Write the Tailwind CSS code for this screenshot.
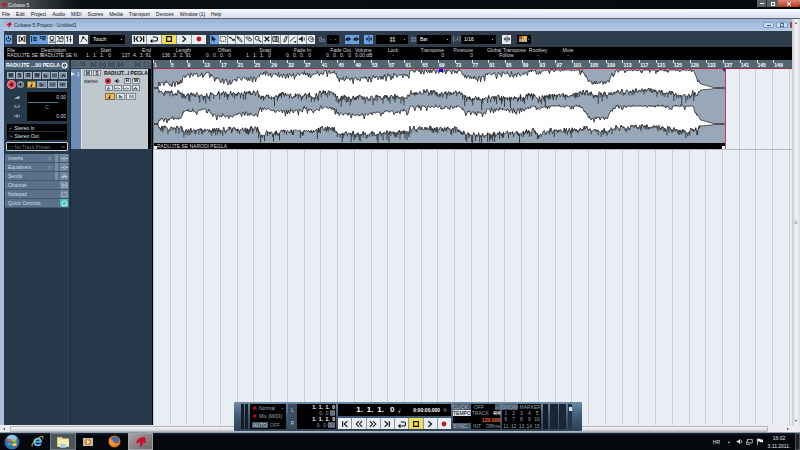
<!DOCTYPE html>
<html lang="en">
<head>
    <meta charset="UTF-8">
    <meta name="viewport" content="width=device-width, initial-scale=1.0">
    <title>Cubase 5</title>
    <script src="https://cdn.jsdelivr.net/npm/@tailwindcss/browser@4"></script>
</head>
<body class="h-screen flex flex-col overflow-hidden bg-[#05080c] font-['Liberation_Sans',sans-serif] text-[5px] leading-[6px] text-white">

    <!-- icons -->
    <svg class="hidden" fill="none">
        <symbol id="logo" viewBox="0 0 10 10"><path d="M8.5 1.5C5 1 2 3 1.500 5.500L4.500 4.500 5 9 6.500 5 9 5.500" fill="#c8102e" stroke="#c8102e"/></symbol>
        <symbol id="power" viewBox="0 0 10 10"><path d="M5 1v4M3 3a3 3 0 1 0 4 0" fill="none" stroke="currentColor" stroke-width="1.3"/></symbol>
        <symbol id="delay" viewBox="0 0 10 10"><path d="M1.500 1v8M8.500 1v8M3 2l4 6M7 2L3 8" fill="none" stroke="currentColor" stroke-width="1.2"/><circle cx="5" cy="5" r="1.500" fill="currentColor"/></symbol>
        <symbol id="inspector" viewBox="0 0 10 10"><path d="M2 1v8M5 2v6M5 3h4M5 5h4M5 7h4" fill="none" stroke="currentColor"/></symbol>
        <symbol id="infoline" viewBox="0 0 10 10"><path d="M1 2h8M1 4h8M4 6h4" fill="none" stroke="currentColor" stroke-width="1.200"/></symbol>
        <symbol id="overview" viewBox="0 0 10 10"><circle cx="5" cy="4" r="2.500" fill="none" stroke="currentColor"/><path d="M1 9h8M3 7h4" stroke="currentColor"/></symbol>
        <symbol id="pool" viewBox="0 0 10 10"><path d="M1 2h3v2h5M4 4v4h5M1 8h2M6 2h3v5" fill="none" stroke="currentColor"/></symbol>
        <symbol id="mixer" viewBox="0 0 10 10"><path d="M3 1v8M7 1v8M1.500 3h3M5.500 6h3" stroke="currentColor"/></symbol>
        <symbol id="automation" viewBox="0 0 10 10"><path d="M1 9l3-6 2 1 3 4" fill="none" stroke="currentColor"/><circle cx="4" cy="3" r="1.300" fill="currentColor"/></symbol>
        <symbol id="prev" viewBox="0 0 10 10"><path d="M2 1.500v7M8 1.500L4 5l4 3.500" fill="none" stroke="currentColor" stroke-width="1.400"/></symbol>
        <symbol id="next" viewBox="0 0 10 10"><path d="M8 1.500v7M2 1.500L6 5 2 8.500" fill="none" stroke="currentColor" stroke-width="1.400"/></symbol>
        <symbol id="prevnext" viewBox="0 0 18 10"><path d="M3 1v8M8 1.500L5 5l3 3.500M15 1v8M10 1.500L13 5l-3 3.500" fill="none" stroke="currentColor" stroke-width="1.500"/></symbol>
        <symbol id="rewind" viewBox="0 0 10 10"><path d="M5 1.500L1.500 5 5 8.500M9 1.500L5.500 5 9 8.500" fill="none" stroke="currentColor" stroke-width="1.300"/></symbol>
        <symbol id="forward" viewBox="0 0 10 10"><path d="M1 1.500L4.500 5 1 8.500M5 1.500L8.500 5 5 8.500" fill="none" stroke="currentColor" stroke-width="1.300"/></symbol>
        <symbol id="loop" viewBox="0 0 10 10"><path d="M3.500 2.500H7a2 2 0 0 1 0 5H1M3 5.500l-2 2 2 2" fill="none" stroke="currentColor" stroke-width="1.300"/></symbol>
        <symbol id="stop" viewBox="0 0 10 10"><path d="M2 2h6v6H2z" fill="none" stroke="currentColor" stroke-width="1.400"/></symbol>
        <symbol id="play" viewBox="0 0 10 10"><path d="M3 1.500L7 5 3 8.500" fill="none" stroke="currentColor" stroke-width="1.500"/></symbol>
        <symbol id="record" viewBox="0 0 10 10"><circle cx="5" cy="5" r="3" fill="#c01828"/></symbol>
        <symbol id="arrow" viewBox="0 0 10 10"><path d="M2 1v7l2-2 1 3 1-1-1-2h3z" fill="currentColor"/></symbol>
        <symbol id="range" viewBox="0 0 10 10"><path d="M1.500 2h7v6h-7z" fill="none" stroke="currentColor" stroke-dasharray="1.500 1"/></symbol>
        <symbol id="split" viewBox="0 0 10 10"><path d="M1 2l7 5M1 3l4 1M6 5l3 3M5 7l4-2" fill="none" stroke="currentColor"/></symbol>
        <symbol id="glue" viewBox="0 0 10 10"><path d="M1 2l3 1 4 5-1 1-4-4zM2 2l1 3" fill="none" stroke="currentColor"/></symbol>
        <symbol id="erase" viewBox="0 0 10 10"><path d="M1 3l3-1 5 4-3 2zM4 5l2-1" fill="none" stroke="currentColor"/></symbol>
        <symbol id="zoom" viewBox="0 0 10 10"><circle cx="4" cy="4" r="2.500" fill="none" stroke="currentColor"/><path d="M6 6l3 3" stroke="currentColor" stroke-width="1.300"/></symbol>
        <symbol id="mute" viewBox="0 0 10 10"><path d="M2 2l6 6M8 2L2 8" stroke="currentColor" stroke-width="1.700"/></symbol>
        <symbol id="warp" viewBox="0 0 10 10"><path d="M1 2h7v6H1zM4 2v6M6 2v6M8 9h2" fill="none" stroke="currentColor"/></symbol>
        <symbol id="draw" viewBox="0 0 10 10"><path d="M4 9V6l3-5 1 1-2 5zM4 9l2-2" fill="none" stroke="currentColor"/></symbol>
        <symbol id="line" viewBox="0 0 10 10"><path d="M1 8l7-6" stroke="currentColor"/><path d="M6 8h4L8 10z" fill="currentColor"/></symbol>
        <symbol id="speaker" viewBox="0 0 10 10"><path d="M1 4h2l3-3v8L3 6H1z" fill="currentColor"/><path d="M8 3v4" stroke="currentColor"/></symbol>
        <symbol id="hand" viewBox="0 0 10 10"><path d="M2 5c0-4 6-4 6 0v2c0 2-4 2-5 0L1 5M4 5h4" fill="none" stroke="currentColor"/></symbol>
        <symbol id="scroll" viewBox="0 0 10 10"><path d="M5 1v8M1 4h3v3H1M6 3l3 2-3 2z" fill="currentColor" stroke="currentColor"/></symbol>
        <symbol id="snap" viewBox="0 0 10 10"><path d="M5 1v8M1 5h3M6 5h3M2.500 3v4M7.500 3v4" stroke="currentColor"/></symbol>
        <symbol id="hash" viewBox="0 0 10 10"><path d="M3 1v8M7 1v8M1 3h8M1 7h8" stroke="currentColor"/></symbol>
        <symbol id="quant" viewBox="0 0 10 10"><path d="M1 1v8M9 1v8M6 2v5M3 7l3-2" fill="none" stroke="currentColor"/></symbol>
        <symbol id="note" viewBox="0 0 10 10"><path d="M6 1v6" stroke="currentColor" stroke-width="1.300"/><circle cx="4.500" cy="7.500" r="2" fill="currentColor"/></symbol>
        <symbol id="lanes" viewBox="0 0 10 10"><path d="M2 8V3h2v5M4 5h4v3H2" fill="none" stroke="currentColor"/></symbol>
        <symbol id="brackets" viewBox="0 0 10 10"><path d="M3 2H1.500v6H3M7 2h1.500v6H7M4 3v4M6 3v4" fill="none" stroke="currentColor"/></symbol>
        <symbol id="edit" viewBox="0 0 10 10"><path d="M3 5h4c0-4-5-3-4 1 0 3 3 2 4 1" fill="none" stroke="currentColor"/></symbol>
        <symbol id="bypass" viewBox="0 0 10 10"><path d="M0 5h3M7 5h3M3 5l2-2 2 2-2 2z" fill="none" stroke="currentColor"/></symbol>
        <symbol id="eq" viewBox="0 0 10 10"><path d="M1 7h2l1-4h2l1 4h2M1 5h8" fill="none" stroke="currentColor"/></symbol>
        <symbol id="ring" viewBox="0 0 10 10"><circle cx="5" cy="5" r="3.500" fill="none" stroke="currentColor" stroke-width="1.500"/><path d="M5 5l3 3" stroke="currentColor"/></symbol>
        <symbol id="level" viewBox="0 0 10 10"><path d="M0 8L9 3v5z" fill="currentColor"/></symbol>
        <symbol id="pan" viewBox="0 0 10 10"><path d="M1 3v4h8V3M3 6V4M7 6V4" fill="none" stroke="currentColor"/></symbol>
        <symbol id="time" viewBox="0 0 10 10"><circle cx="5" cy="5" r="2" fill="none" stroke="currentColor"/><path d="M5 3v4M1 3v4M9 3v4" stroke="currentColor"/></symbol>
        <symbol id="caret" viewBox="0 0 10 10"><path d="M2 3h6L5 7z" fill="currentColor"/></symbol>
    </svg>

    <!-- application title bar -->
    <header class="h-[9px] shrink-0 flex items-center gap-px pl-px bg-linear-to-r from-[#686c70] via-[#0b0f14] via-10% to-[#05080c]">
        <svg class="size-[6px]"><use href="#logo"/></svg>
        <h1 class="flex-1 text-[#e6e9ec]">Cubase 5</h1>
        <div class="flex self-start h-[7px]">
            <button aria-label="Minimize" class="w-[10px] bg-[#5b6066] flex items-center justify-center border-r border-[#22262b]"><span class="w-[4px] h-px bg-white"></span></button>
            <button aria-label="Restore" class="w-[11px] bg-[#5b6066] flex items-center justify-center"><span class="size-[4px] border border-white"></span></button>
            <button aria-label="Close" class="w-[22px] bg-linear-to-b from-[#d98874] to-[#b5301a] flex items-center justify-center rounded-br-[2px]"><svg class="size-[6px]"><use href="#mute"/></svg></button>
        </div>
    </header>

    <nav class="h-[9px] shrink-0 flex items-center gap-[6px] px-[2px] bg-linear-to-b from-[#f8f9fc] to-[#d9ddec] text-[#111]">
        <a href="#">File</a><a href="#">Edit</a><a href="#">Project</a><a href="#">Audio</a><a href="#">MIDI</a><a href="#">Scores</a><a href="#">Media</a><a href="#">Transport</a><a href="#">Devices</a><a href="#">Window (1)</a><a href="#">Help</a>
    </nav>

    <div class="flex-1 min-h-0 flex border-t border-[#5c6570]">
        <!-- project window -->
        <div class="flex-1 min-w-0 flex flex-col pl-[4px] bg-[#a9c0dc]">
            <div class="h-[12px] shrink-0 flex items-center gap-[2px] pl-[2px] bg-linear-to-b from-[#98b4d2] to-[#b4cce8] text-[#1b2733]">
                <svg class="size-[6px]"><use href="#logo"/></svg>
                <h2 class="flex-1">Cubase 5 Project - Untitled1</h2>
                <button aria-label="Minimize project" class="w-[11px] h-[6px] rounded-[1px] border border-[#7e9cc0] bg-[#c9dbef] flex items-center justify-center"><span class="w-[4px] h-px bg-[#3b5068]"></span></button>
                <button aria-label="Restore project" class="w-[12px] h-[6px] rounded-[1px] border border-[#7e9cc0] bg-[#c9dbef] flex items-center justify-center"><span class="size-[4px] border border-[#54708f]"></span></button>
                <span class="w-[2px] h-[6px] bg-[#a84848]"></span>
            </div>

            <!-- toolbar -->
            <div class="h-[16px] shrink-0 flex items-center bg-[#2f3c4b] text-[#111] pl-px">
                <div data-tools="power:b" class="flex h-[9px] w-[7px] mr-[5px]"></div>
                <div data-tools="delay" class="flex h-[9px] w-[9px] mr-[4px]"></div>
                <div data-tools="inspector:b infoline:b overview pool mixer" class="flex h-[9px] w-[43px] mr-[6px]"></div>
                <div data-tools="automation" class="flex h-[9px] w-[9px] mr-[2px]"></div>
                <label class="relative flex h-[9px] w-[35px] mr-[7px] bg-black text-white"><select aria-label="Automation mode" class="appearance-none w-full pl-[3px] outline-none"><option>Touch</option></select><svg class="absolute right-[2px] top-[3px] size-[3px]"><use href="#caret"/></svg></label>
                <div data-tools="prevnext loop stop:y play record" class="flex h-[9px] w-[74px] mr-[4px]"></div>
                <div data-tools="arrow:b range split glue erase zoom mute warp draw line speaker hand" class="flex h-[9px] w-[105px] mr-[3px]"></div>
                <svg class="size-[8px] mr-px text-[#8291a0]"><use href="#lanes"/></svg>
                <label class="relative flex h-[9px] w-[12px] mr-[6px] bg-black text-[#9aa]"><select aria-label="Tool colour" class="appearance-none w-full pl-[3px] outline-none"><option>-</option></select><svg class="absolute right-[2px] top-[3px] size-[3px]"><use href="#caret"/></svg></label>
                <div data-tools="scroll:b scroll:b" class="flex h-[9px] w-[14px] mr-[5px]"></div>
                <div data-tools="snap:b" class="flex h-[9px] w-[9px] mr-[3px]"></div>
                <button aria-label="Snap type" class="relative flex items-center justify-center h-[9px] w-[32px] mr-[2px] bg-black text-[#cfe0cc]"><svg class="size-[7px]"><use href="#hash"/></svg><svg class="absolute right-[2px] top-[3px] size-[3px]"><use href="#caret"/></svg></button>
                <svg class="size-[7px] text-[#8b9aa8]"><use href="#hash"/></svg>
                <label class="relative flex h-[9px] w-[34px] mr-[2px] bg-black text-white"><select aria-label="Grid type" class="appearance-none w-full pl-[3px] outline-none"><option>Bar</option></select><svg class="absolute right-[2px] top-[3px] size-[3px]"><use href="#caret"/></svg></label>
                <svg class="size-[8px] text-[#8b9aa8]"><use href="#quant"/></svg>
                <label class="relative flex h-[9px] w-[35px] mr-[6px] bg-black text-white"><select aria-label="Quantize" class="appearance-none w-full pl-[3px] outline-none"><option>1/16</option></select><svg class="absolute right-[2px] top-[3px] size-[3px]"><use href="#caret"/></svg></label>
                <div data-tools="snap" class="flex h-[9px] w-[9px] mr-[6px]"></div>
                <button aria-label="Colours" class="flex items-center h-[9px] w-[14px] pl-[2px] bg-black text-[#9aa]">
                    <span class="grid grid-cols-3 w-[8px] h-[6px]"><i class="bg-[#b84a32]"></i><i class="bg-[#d88a2c]"></i><i class="bg-[#e4c23e]"></i><i class="bg-[#9aa2b0]"></i><i class="bg-[#e0b04a]"></i><i class="bg-[#b8b48c]"></i></span>
                    <svg class="size-[3px]"><use href="#caret"/></svg>
                </button>
            </div>

            <!-- info line -->
            <dl id="info" class="h-[13px] shrink-0 flex pl-[3px] pt-px bg-black text-[#d0d4d8] leading-[5px] whitespace-nowrap"></dl>

            <div class="flex-1 min-h-0 flex bg-[#273a4b]">
                <!-- inspector -->
                <aside class="w-[67px] shrink-0 flex flex-col pl-px pr-px border-r border-[#1b2936] text-[#d5dde6]">
                    <div class="h-[10px] shrink-0 flex items-center justify-between px-px bg-[#4a6076] font-bold text-white whitespace-nowrap"><span>RADUJTE ...IXI PEGLA</span><svg class="size-[7px] shrink-0"><use href="#ring"/></svg></div>
                    <div class="pt-[2px] px-[2px] pb-[3px] flex flex-col gap-px">
                        <div class="flex gap-px h-[7px] text-[#111]" data-keys="M S R W lanes brackets eq"></div>
                        <div class="flex items-center h-[9px] gap-px">
                            <button aria-label="Record enable" class="size-[9px] rounded-full bg-[#df3f4c] border border-[#f2a0a6] flex items-center justify-center"><span class="size-[3px] rounded-full bg-[#3a0a10]"></span></button>
                            <button aria-label="Monitor" class="size-[7px] rounded-full bg-[#8493a4] text-[#111] flex items-center justify-center"><svg class="size-[5px]"><use href="#speaker"/></svg></button>
                            <div class="flex-1 flex gap-px h-[7px] ml-[2px] text-[#111]" data-keys="note:o lanes brackets time"></div>
                        </div>
                    </div>
                    <div class="h-[29px] shrink-0 flex px-[2px] mb-[3px]">
                        <div class="w-[20px] flex flex-col justify-around items-center text-[#b9c6d4]"><svg class="size-[6px]"><use href="#level"/></svg><svg class="size-[6px]"><use href="#pan"/></svg><svg class="size-[6px]"><use href="#time"/></svg></div>
                        <div class="flex-1 flex flex-col bg-black px-px">
                            <span class="h-[10px] pt-[2px] text-right">0.00</span>
                            <span class="h-px bg-[#4d7f9e] mr-[8px]"></span>
                            <span class="h-[9px] pt-px text-center text-[#8796a5]">C</span>
                            <span class="h-[8px] pt-px text-right">0.00</span>
                        </div>
                    </div>
                    <div class="h-[16px] shrink-0 mx-[2px] mb-[2px] bg-black flex flex-col justify-around px-[2px] text-[#dfe4ea]"><span class="border-b border-[#26323e]"><span class="text-[#7b8a99]">+'</span> Stereo In</span><span><span class="text-[#7b8a99]">|+</span> Stereo Out</span></div>
                    <button class="h-[9px] shrink-0 mx-px mb-[3px] rounded-[1px] bg-black border border-[#b9cfd4] flex items-center justify-between px-[2px] text-[#6d7882]"><span>◻ No Track Preset</span><svg class="size-[4px] text-[#9aa]"><use href="#bypass"/></svg></button>
                    <div id="tabs" class="flex flex-col"></div>
                </aside>

                <!-- track list -->
                <section class="w-[82px] shrink-0 flex flex-col pr-px border-r border-black">
                    <div class="h-[9px] shrink-0 flex items-center gap-[2px] px-px bg-[#566673] border-b border-[#39464f] text-[#2c3843]">
                        <svg class="size-[6px]"><use href="#range"/></svg><svg class="size-[6px]"><use href="#hash"/></svg>
                        <svg class="size-[7px] ml-[2px]"><use href="#brackets"/></svg><svg class="size-[7px]"><use href="#brackets"/></svg><svg class="size-[7px]"><use href="#brackets"/></svg><svg class="size-[7px]"><use href="#brackets"/></svg>
                        <svg class="size-[7px] ml-auto"><use href="#brackets"/></svg><svg class="size-[7px]"><use href="#range"/></svg>
                    </div>
                    <article class="h-[80px] shrink-0 flex text-[#111]">
                        <div class="w-[12px] bg-[#6d8cb4] text-[#dce7f4] flex justify-between pt-[2px] pr-px h-full"><span class="border-y-2 border-l-4 border-y-transparent border-l-[#dce7f4] h-0 mt-px"></span><span>1</span></div>
                        <div class="flex-1 bg-[#bfc7cf] border-l border-[#e0e5ea] pl-[2px] pt-px flex flex-col gap-px">
                            <div class="flex h-[6px] items-center gap-[3px]"><div class="flex gap-px h-full w-[17px]" data-keys="M:w S:w"></div><b class="whitespace-nowrap leading-[6px]">RADUJT...I PEGLA</b></div>
                            <div class="flex h-[7px] items-center">
                                <span class="w-[21px]">stereo</span>
                                <span class="size-[6px] rounded-full bg-[#c9303c] flex items-center justify-center"><i class="size-[2px] rounded-full bg-black"></i></span>
                                <svg class="size-[6px] ml-[3px]"><use href="#speaker"/></svg>
                                <div class="flex gap-px h-[6px] w-[16px] ml-[4px]" data-keys="R:w W:w"></div>
                            </div>
                            <div class="flex gap-px h-[6px] w-[35px] ml-[21px]" data-keys="edit:w bypass:w bypass:w eq:w"></div>
                            <div class="flex gap-px h-[7px] w-[31px] mt-px ml-[21px]" data-keys="note:o lanes:w brackets:w"></div>
                        </div>
                        <div class="w-[4px] bg-black"></div>
                    </article>
                </section>

                <!-- arrange area -->
                <main class="relative flex-1 min-w-0 flex flex-col bg-[#e9edf4]">
                    <div id="gridlines" class="absolute inset-x-0 top-[9px] bottom-0 flex pr-[2px]"></div>
                    <div id="ruler" class="relative h-[9px] shrink-0 flex pr-[2px] bg-[#536570] border-b border-[#a03048] text-white overflow-hidden"></div>
                    <div id="clip" class="relative h-[80px] shrink-0 flex flex-col bg-[#98a8b8] border-r border-[#c03a60] border-l border-l-[#3c8c94]">
                        <svg id="wave" class="flex-1 min-h-0 w-full" preserveAspectRatio="none" viewBox="0 0 573 74"></svg>
                        <div class="h-[6px] shrink-0 flex items-center bg-black text-[#d8d8d8]"><span class="size-[3px] bg-white self-end"></span><span class="flex-1">RADUJTE SE NARODI PEGLA</span><span class="size-[3px] bg-white self-end"></span></div>
                        <span class="absolute left-1/2 top-0 w-[4px] h-[3px] bg-[#1010e0]"></span>
                        <span class="absolute right-0 top-0 border-t-[3px] border-l-[3px] border-t-[#202080] border-l-transparent"></span>
                    </div>
                    <div class="relative h-px shrink-0 bg-[#b5bac2]"></div>
                </main>
            </div>
        </div>
        <!-- vertical scroll bar -->
        <div class="w-[8px] shrink-0 flex flex-col items-center justify-between py-[2px] bg-linear-to-r from-[#c6c9cf] via-[#f4f4f6] to-[#dcdde2] text-[#333]">
            <svg class="size-[4px] rotate-180"><use href="#caret"/></svg>
            <span class="text-[#777]">≡</span>
            <svg class="size-[4px]"><use href="#caret"/></svg>
        </div>
    </div>

    <!-- horizontal scroll bar -->
    <div class="h-[8px] shrink-0 flex items-center bg-[#ececef] text-[#333] border-b border-[#8e9cab]">
        <svg class="size-[4px] ml-[2px] rotate-90"><use href="#caret"/></svg>
        <div class="flex-1 h-[6px] ml-[4px] mr-[18px] rounded-[1px] border border-[#b4b6bb] bg-linear-to-b from-[#f6f6f7] to-[#cfd0d4]"></div>
        <svg class="size-[4px] mr-[10px] -rotate-90"><use href="#caret"/></svg>
    </div>

    <!-- floating transport panel -->
    <section aria-label="Transport" class="absolute left-[234px] bottom-[19px] w-[348px] h-[29px] flex gap-[2px] p-[2px] rounded-[1px] bg-linear-to-b from-[#6d8aa6] via-[#3f5b75] to-[#2b4258] text-[#98a5b2] leading-[6px]">
        <div class="w-[12px] flex gap-px pl-[5px]"><span class="w-[3px] bg-[#141d26]"></span><span class="w-[3px] bg-[#141d26]"></span></div>
        <div class="w-[36px] bg-black px-[2px] flex flex-col justify-around">
            <span class="flex items-center gap-[2px]"><svg class="size-[5px]"><use href="#logo"/></svg>Normal<svg class="size-[3px] ml-auto"><use href="#caret"/></svg></span>
            <span class="flex items-center gap-[2px] whitespace-nowrap"><svg class="size-[5px]"><use href="#logo"/></svg>Mix (MIDI)</span>
            <span class="flex gap-[2px] whitespace-nowrap text-[#8595a5]"><span class="bg-[#4b5c6c] px-px text-[#c0cad4]">AUTO</span>OFF</span>
        </div>
        <div class="w-[48px] bg-black flex">
            <div class="w-[9px] bg-[#3a4d60] flex flex-col justify-around items-center text-[#c3ced9]"><span>L</span><span>R</span></div>
            <div class="flex-1 flex flex-col text-right pr-px">
                <b class="text-white">1.&ensp;1.&ensp;1.&ensp;0</b><span>0.&ensp;0 <i class="not-italic bg-[#4b5c6c]">IN</i></span>
                <b class="text-white">1.&ensp;1.&ensp;1.&ensp;0</b><span>0.&ensp;0 <i class="not-italic bg-[#4b5c6c]">OU</i></span>
            </div>
        </div>
        <div class="w-[113px] flex flex-col gap-[2px]">
            <div class="h-[12px] flex items-center justify-between bg-black text-white px-[4px]"><span class="text-[#6d7f90]">:</span><b class="text-[8px] leading-[10px] pl-[10px]">1. &thinsp;1. &thinsp;1. &ensp;0</b><svg class="size-[5px] text-[#8796a5]"><use href="#note"/></svg><b class="pl-[8px]">0:00:00.000</b><svg class="size-[4px] text-[#8796a5]"><use href="#ring"/></svg></div>
            <div class="flex-1 flex text-[#111]" data-tools="prev rewind forward next loop stop:y play record"></div>
        </div>
        <div class="w-[47px] bg-black flex flex-col justify-around whitespace-nowrap">
            <span class="flex gap-[3px]"><i class="not-italic w-[18px] bg-[#4b5c6c] text-[#aab6c2]">CLICK</i>OFF<i class="not-italic ml-auto bg-[#4b5c6c]">♪♪</i></span>
            <span class="flex gap-px"><i class="not-italic bg-[#d9dee3] text-black">TEMPO</i>TRACK<b class="ml-auto text-white">4/4</b></span>
            <b class="text-right text-[#f07030]">120.000</b>
            <span class="flex gap-[2px]"><i class="not-italic w-[18px] bg-[#4b5c6c] text-[#aab6c2]">SYNC</i>INT<span class="ml-auto">Offline</span></span>
        </div>
        <div class="w-[39px] bg-black flex flex-col">
            <span class="flex justify-between whitespace-nowrap"><i class="not-italic bg-[#4b5c6c]">SHOW</i>MARKER</span>
            <div id="markers" class="flex-1 grid grid-cols-5 text-center"></div>
        </div>
        <div class="w-[5px] bg-[#141d26]"></div>
        <div class="w-[16px] flex gap-px"><span class="flex-1 bg-[#1a2631]"></span><span class="flex-1 bg-[#1a2631]"></span></div>
        <div class="w-[4px] bg-[#253545] flex flex-col items-center pt-[3px]"><span class="w-[3px] h-[4px] bg-[#dfe8f0]"></span></div>
    </section>

    <!-- taskbar -->
    <footer class="h-[17px] shrink-0 flex items-center bg-linear-to-b from-[#18202a] to-[#04070b] to-20%">
        <button aria-label="Start" class="w-[24px] h-full flex justify-center items-center">
            <svg class="size-[16px]" viewBox="0 0 16 16"><circle cx="8" cy="8" r="7.500" fill="#2d6fa8"/><ellipse cx="8" cy="4" rx="5" ry="3" fill="#8fc2e4"/><path d="M3.500 5.500Q5.500 4 7.500 5.200V8Q5.500 7 3.500 8z" fill="#e8632c"/><path d="M8.300 5.500Q10 6.500 12.500 5v2.800Q10 9 8.300 8z" fill="#8ec63f"/><path d="M3.500 8.800Q5.500 7.800 7.500 8.800v2.800Q5.500 10.500 3.500 11.500z" fill="#3ba0e0"/><path d="M8.300 8.900Q10 10 12.500 8.600v2.800Q10 12.800 8.300 11.700z" fill="#fbc52f"/></svg>
        </button>
        <button aria-label="Internet Explorer" class="w-[26px] h-full flex justify-center items-center">
            <svg class="size-[13px]" viewBox="0 0 12 12"><path d="M3 6.200h6.300C9 2.500 3.500 2.500 3 6.200c0 4 5 4 6 1.800" fill="none" stroke="#55b4ee" stroke-width="1.800"/><path d="M1 10.500C0 8 6 1.500 10.800 1.200c.8.600.2 1.800-.4 2.400" fill="none" stroke="#e6c14e" stroke-width=".9"/></svg>
        </button>
        <button aria-label="Explorer" class="w-[26px] h-full border border-[#6d7a80] bg-[#4b565c] flex justify-center items-center">
            <svg class="size-[14px]" viewBox="0 0 12 12"><path d="M1 2h4l1 1h5v7H1z" fill="#f3dc86"/><path d="M2 4h9v6H2z" fill="#f9ecae"/><path d="M3.500 7.500h5V11h-5z" fill="#a7cde6"/></svg>
        </button>
        <button aria-label="Media Player" class="w-[24px] h-full flex justify-center items-center">
            <svg class="size-[12px]" viewBox="0 0 12 12"><path d="M1 2h10v8H1z" fill="#a8cbe4"/><circle cx="6" cy="6" r="3.600" fill="#ee8422"/><path d="M5 4l3 2-3 2z" fill="#fff"/></svg>
        </button>
        <button aria-label="Firefox" class="w-[28px] h-full flex justify-center items-center">
            <svg class="size-[13px]" viewBox="0 0 12 12"><circle cx="6" cy="6" r="5.500" fill="#e56a1c"/><circle cx="6.500" cy="4.800" r="3.500" fill="#3a6cb4"/><path d="M1 3c2 0 2 2 4 2.500 0 2 3 3 5 1-1 5-9 5-9-.5z" fill="#f3932a"/></svg>
        </button>
        <button aria-label="Cubase" class="w-[25px] h-full border border-[#a0a4a8] bg-linear-to-br from-[#a9a4a6] to-[#6c6668] flex justify-center items-center">
            <svg class="size-[12px]"><use href="#logo"/></svg>
        </button>
        <div class="ml-auto flex items-center gap-[3px] text-[#e4e8ec]">
            <span class="mr-[4px]">HR</span>
            <svg class="size-[4px] rotate-180"><use href="#caret"/></svg>
            <svg class="size-[7px] ml-[2px]"><use href="#speaker"/></svg>
            <svg class="size-[7px]" viewBox="0 0 10 10"><path d="M2 2h7v5H3zM1 4v5h5" fill="none" stroke="#e4e8ec"/></svg>
            <svg class="size-[7px]" viewBox="0 0 10 10"><path d="M2 1v9" stroke="#e4e8ec"/><path d="M2 1h4l1 1h3v4H6L5 5H2z" fill="#e4e8ec"/></svg>
            <time class="w-[24px] ml-px text-center leading-[8px] whitespace-nowrap">16:02<br>3.11.2011.</time>
        </div>
        <button aria-label="Show desktop" class="w-[5px] h-full ml-[4px] border border-[#4a5258] bg-[#1a2026]"></button>
    </footer>

    <script>
        const BARS = 152        // bars between the first and last grid line
        const CLIP_LENGTH = 136.93

        const icon = (name, size) => `<svg class="${size}"><use href="#${name}"/></svg>`

        // toolbar buttons, "name:state"
        const toolColors = { b: "bg-[#68a4ee]", y: "bg-[#f2dc50]", n: "bg-[#e9edf1]" }
        document.querySelectorAll("[data-tools]").forEach(group => {
            group.innerHTML = group.dataset.tools.split(" ").map(tool => {
                const [name, state] = tool.split(":")
                return `<button aria-label="${name}" class="flex-1 min-w-0 flex items-center justify-center border-r border-[#8a97a4] last:border-r-0 ${toolColors[state || "n"]}">${icon(name, name == "prevnext" ? "w-[14px] h-[8px]" : "size-[8px]")}</button>`
            }).join("")
        })

        // small track buttons, one letter or an icon
        const keyColors = { w: "bg-[#e6e9ec] border-[#7d8791]", o: "bg-[#f6bd55] border-[#8a6d32]", n: "bg-[#77889a] border-[#9fb0c0]" }
        document.querySelectorAll("[data-keys]").forEach(group => {
            group.innerHTML = group.dataset.keys.split(" ").map(key => {
                const [name, state] = key.split(":")
                const face = name.length == 1 ? `<b>${name}</b>` : icon(name, "size-[5px]")
                return `<button aria-label="${name}" class="flex-1 min-w-0 flex items-center justify-center border leading-[5px] ${keyColors[state || "n"]}">${face}</button>`
            }).join("")
        })

        const info = [
            ["File", "RADUJTE SE N", "w-[34px]"],
            ["Description", "RADUJTE SE N", "w-[34px]"],
            ["Start", "1. &nbsp;1. &nbsp;1. &nbsp; 0", "w-[36px] text-right"],
            ["End", "137. 4. &nbsp;3. 91", "w-[40px] text-right"],
            ["Length", "136. 3. &nbsp;2. 91", "w-[40px] text-right"],
            ["Offset", "0. &nbsp;0. &nbsp;0. &nbsp; 0", "w-[40px] text-right"],
            ["Snap", "1. &nbsp;1. &nbsp;1. &nbsp; 0", "w-[40px] text-right"],
            ["Fade In", "0. &nbsp;0. &nbsp;0. &nbsp; 0", "w-[40px] text-right"],
            ["Fade Out", "0. &nbsp;0. &nbsp;0. &nbsp; 0", "w-[40px] text-right"],
            ["Volume", "0.00 dB", "w-[30px] pl-[4px]"],
            ["Lock", "-", "w-[24px] text-center"],
            ["Transpose", "0", "w-[39px] text-right"],
            ["Finetune", "0", "w-[29px] text-right"],
            ["Global Transpose", "Follow", "w-[55px] pl-[12px] text-center"],
            ["Rootkey", "-", "w-[20px] text-center"],
            ["Mute", "-", "w-[40px] text-center"],
        ]
        document.getElementById("info").innerHTML = info.map(([label, value, cls]) =>
            `<div class="shrink-0 ${cls}"><dt>${label}</dt><dd>${value}</dd></div>`).join("")

        const tabs = [["Inserts", "bypass"], ["Equalisers", "bypass"], ["Sends", "eq"], ["Channel", "brackets"], ["Notepad", "range"], ["Quick Controls", "ring"]]
        document.getElementById("tabs").innerHTML = tabs.map(([label, name], i) =>
            `<button class="h-[9px] flex items-center pl-[3px] pr-px bg-[#5a7189] border-b border-[#43586c] text-[#d0dae4]">
                <span class="flex-1 text-left">${label}</span>
                ${i < 2 ? icon("power", "size-[5px] text-[#8ea2b6]") : ""}
                ${i < 3 ? '<span class="w-[3px] h-full ml-[3px] mr-[2px] bg-[#7b8fa3]"></span>' : ""}
                <span class="${i == 5 ? "bg-[#3fc0bc]" : "bg-[#71869b]"} size-[8px] flex items-center justify-center">${icon(name, "size-[7px]")}</span>
            </button>`).join("")

        document.getElementById("markers").innerHTML = Array.from({ length: 15 }, (_, i) => `<span>${i + 1}</span>`).join("")

        // ruler and grid lines, one column for every four bars
        let ruler = "", lines = ""
        for (let bar = 1; bar <= BARS; bar += 4) {
            ruler += `<span class="relative flex-1 min-w-0 pt-[2px] pl-px font-bold leading-[7px]">${bar}<i class="absolute left-0 top-0 w-px h-[3px] bg-white"></i></span>`
            lines += `<span class="flex-1 border-l border-[#c9ced6]"></span>`
        }
        document.getElementById("ruler").innerHTML = ruler
        document.getElementById("gridlines").innerHTML = lines + '<span class="border-l border-[#c9ced6]"></span>'
        document.getElementById("clip").style.width = CLIP_LENGTH / (BARS + 0.8) * 100 + "%"

        // waveform envelope: x, level above the centre, level below the centre
        const envelope = [
            [0, 0, 0], [4, 0, 0], [5, 4, 3], [17, 4, 4], [27, 6, 4], [30, 12, 6], [55, 14, 7], [60, 9, 5], [78, 6, 5], [84, 9, 5],
            [90, 10, 5], [104, 9, 4], [107, 15, 10], [115, 14, 8], [122, 12, 8], [130, 12, 6], [147, 13, 8], [153, 15, 5], [160, 12, 8],
            [169, 16, 4], [180, 15, 4], [185, 10, 9], [200, 8, 9], [225, 10, 9], [240, 12, 8], [256, 12, 8], [257, 17, 4], [275, 17, 3],
            [290, 16, 5], [306, 17, 4], [312, 11, 9], [332, 10, 11], [334, 13, 9], [350, 14, 9], [370, 14, 8], [382, 17, 6], [385, 14, 11],
            [398, 18, 6], [415, 18, 6], [427, 18, 5], [433, 12, 3], [437, 5, 5], [455, 5, 6], [459, 12, 4], [465, 18, 3], [500, 18, 2],
            [525, 18, 5], [531, 18, 7], [534, 18, 9], [541, 18, 4], [545, 8, 6], [549, 4, 2], [560, 1, 1], [564, 0, 0], [573, 0, 0],
        ]
        let seed = 7
        const random = () => (seed = (seed * 16807) % 2147483647) / 2147483647

        function drawChannel(center){
            const top = [], low = [], spikes = []
            for (let x = 0; x <= 573; x++) {
                const i = Math.max(1, envelope.findIndex(point => point[0] >= x))
                const [x0, a0, b0] = envelope[i - 1]
                const [x1, a1, b1] = envelope[i]
                const t = (x - x0) / (x1 - x0)
                const a = a0 + (a1 - a0) * t
                const b = b0 + (b1 - b0) * t
                const quiet = x < 5 || x > 548
                const up = quiet ? a : Math.min(18, a + 2 - random() * random() * 7)
                const down = quiet ? b : b - 2 + random() * 5
                top.push(`${x} ${center - up}`)
                low.unshift(`${x} ${center + down}`)
                if (!quiet) {
                    if (random() < 0.65) spikes.push(`M${x} ${center + down}v${random() * random() * b * 1.3 + 1}`)
                    if (random() < 0.25) spikes.push(`M${x} ${center - up}v${random() * -2}`)
                }
            }
            return `<path d="M${top.join("L")}L${low.join("L")}z" fill="#fff" stroke="#111" stroke-width="0.7"/>
                <path d="${spikes.join("")}" stroke="#1c2126" stroke-width="0.8"/>`
        }
        document.getElementById("wave").innerHTML = drawChannel(19) + drawChannel(55)
    </script>
</body>
</html>
